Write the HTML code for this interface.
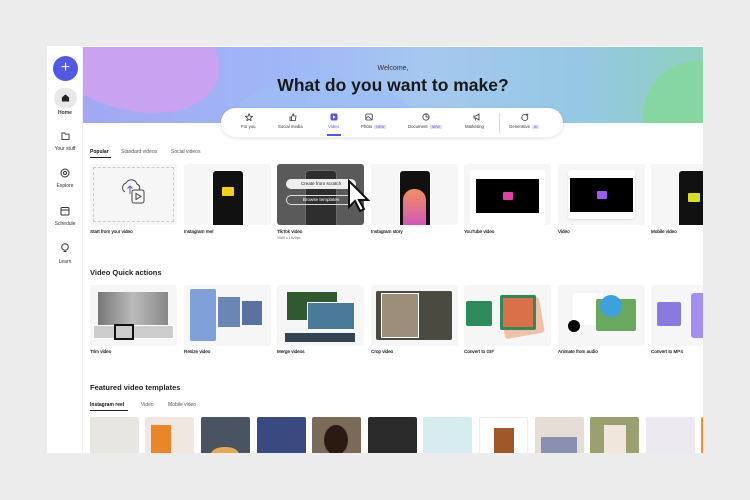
<!DOCTYPE html>
<html><head><meta charset="utf-8"><style>
*{margin:0;padding:0;box-sizing:border-box}
body{width:750px;height:500px;background:#ececec;font-family:"Liberation Sans",sans-serif;position:relative;overflow:hidden;color:#222}
.win{position:absolute;left:47px;top:46px;width:656px;height:407px;background:#fff;overflow:hidden}
.side{position:absolute;left:0;top:0;width:36px;height:407px;background:#fff;border-right:1px solid #eee}
.a{position:absolute}
.banner{position:absolute;left:36px;top:1px;width:620px;height:76px;background:linear-gradient(90deg,#a2a8f4 0%,#9fb8f6 35%,#a6c8f0 55%,#95c8e4 80%,#8ed0bf 100%);overflow:hidden}
.t{position:absolute;font-size:5px;color:#333;white-space:nowrap}
.card{position:absolute;background:#f6f6f6;border-radius:3px}
.lbl{position:absolute;font-size:4.6px;color:#222;white-space:nowrap;-webkit-text-stroke:.15px #222}
.h{position:absolute;font-size:7.5px;font-weight:bold;color:#222}
.ph{position:absolute;background:#111;border-radius:4px;border:1.5px solid #fff}
.new{background:#dfe2ff;color:#5a5ee0;font-size:3.5px;padding:0 2px;margin-left:2px}
.th{position:absolute;top:371px;width:49px;height:40px;border-radius:2px}
</style></head><body>
<div class="win">
 <div class="side">
  <div class="a" style="left:6px;top:10px;width:25px;height:25px;border-radius:50%;background:#5258e4;color:#fff;font-size:16px;text-align:center;line-height:24px">+</div>
  <div class="a" style="left:7px;top:42px;width:23px;height:20px;border-radius:10px;background:#e8e8e8"></div>
  <svg class="a" style="left:14px;top:47px" width="9" height="9" viewBox="0 0 10 10"><path d="M1 5L5 1.5 9 5V9.5H1Z" fill="#222"/></svg>
  <div class="t" style="left:0;width:36px;text-align:center;top:64px;font-weight:bold">Home</div>
  <svg class="a" style="left:14px;top:86px" width="9" height="8" viewBox="0 0 10 9"><path d="M1 1h3l1 1.5h4v6H1z" fill="none" stroke="#333"/></svg>
  <div class="t" style="left:0;width:36px;text-align:center;top:100px">Your stuff</div>
  <svg class="a" style="left:13px;top:122px" width="10" height="10"><circle cx="5" cy="5" r="4" fill="none" stroke="#333"/><circle cx="5" cy="5" r="1.5" fill="none" stroke="#333"/></svg>
  <div class="t" style="left:0;width:36px;text-align:center;top:137px">Explore</div>
  <svg class="a" style="left:13px;top:160px" width="10" height="10"><rect x="1" y="1.5" width="8" height="7.5" rx="1" fill="none" stroke="#333"/><path d="M1 4h8" stroke="#333"/></svg>
  <div class="t" style="left:0;width:36px;text-align:center;top:175px">Schedule</div>
  <svg class="a" style="left:13px;top:197px" width="10" height="10"><circle cx="5" cy="4" r="3.3" fill="none" stroke="#333"/><path d="M3.5 8.5h3" stroke="#333"/></svg>
  <div class="t" style="left:0;width:36px;text-align:center;top:213px">Learn</div>
 </div>
 <div class="banner">
  <div class="a" style="left:-60px;top:-60px;width:200px;height:120px;border-radius:50%;background:#c9a2f1;transform:rotate(20deg)"></div>
  <div class="a" style="left:140px;top:30px;width:200px;height:120px;border-radius:50%;background:#9dbdf5;opacity:.7"></div>
  <div class="a" style="left:560px;top:14px;width:110px;height:110px;border-radius:50%;background:#86d6a2"></div>
  <div class="a" style="left:0;width:620px;text-align:center;top:18px;font-size:7px;color:#333">Welcome,</div>
  <div class="a" style="left:0;width:620px;text-align:center;top:28px;font-size:17.5px;font-weight:bold;color:#1a1a1a">What do you want to make?</div>
 </div>
 <div class="a" style="left:174px;top:62px;width:342px;height:29px;background:#fff;border-radius:15px;box-shadow:0 1px 4px rgba(0,0,0,.12)"></div>
 <div class="a" style="left:452px;top:67px;width:1px;height:20px;background:#ddd"></div>
 <div class="a" style="left:280px;top:88px;width:14px;height:1.5px;background:#5258e4"></div>
 <svg class="a" style="left:198px;top:67px" width="8" height="8"><path d="M4 .8l1 2.3 2.5.3-1.9 1.7.5 2.5L4 6.4 1.9 7.6l.5-2.5L.5 3.4 3 3.1z" fill="none" stroke="#333" stroke-width=".8"/></svg>
 <svg class="a" style="left:242px;top:67px" width="8" height="8"><path d="M1 4h1.5v3.5H1zM2.5 4L4 1h.7v2H7l-.6 4.5H2.5" fill="none" stroke="#333" stroke-width=".8"/></svg>
 <svg class="a" style="left:283px;top:67px" width="8" height="8"><rect x=".5" y=".5" width="7" height="7" rx="1.5" fill="#5258e4"/><path d="M3 2.3v3.4L5.6 4z" fill="#fff"/></svg>
 <svg class="a" style="left:318px;top:67px" width="8" height="8"><rect x=".8" y="1" width="6.4" height="6" rx="1" fill="none" stroke="#333" stroke-width=".8"/><path d="M1 5.5l2-2 4 3" fill="none" stroke="#333" stroke-width=".7"/></svg>
 <svg class="a" style="left:375px;top:67px" width="8" height="8"><circle cx="4" cy="4" r="3.2" fill="none" stroke="#333" stroke-width=".8"/><path d="M4 .8V4h3.2" fill="none" stroke="#333" stroke-width=".8"/></svg>
 <svg class="a" style="left:426px;top:67px" width="8" height="8"><path d="M1 3h2l3-2v6L3 5H1z M2 5l.7 2.5" fill="none" stroke="#333" stroke-width=".8"/></svg>
 <svg class="a" style="left:474px;top:67px" width="8" height="8"><circle cx="3.8" cy="4.5" r="3" fill="none" stroke="#333" stroke-width=".8"/><path d="M6 .5v2.5M4.8 1.8h2.5" stroke="#333" stroke-width=".8"/></svg>
 <div class="t" style="left:194px;top:78px;font-size:4.3px">For you</div>
 <div class="t" style="left:231px;top:78px;font-size:4.3px">Social media</div>
 <div class="t" style="left:281px;top:78px;font-size:4.3px;color:#5258e4">Video</div>
 <div class="t" style="left:314px;top:78px;font-size:4.3px">Photo<span class="new">NEW</span></div>
 <div class="t" style="left:361px;top:78px;font-size:4.3px">Document<span class="new">NEW</span></div>
 <div class="t" style="left:418px;top:78px;font-size:4.3px">Marketing</div>
 <div class="t" style="left:462px;top:78px;font-size:4.3px">Generative<span class="new">AI</span></div>

 <div class="t" style="left:43px;top:103px;font-weight:bold;color:#111">Popular</div>
 <div class="a" style="left:43px;top:111px;width:21px;height:1.2px;background:#222"></div>
 <div class="t" style="left:74px;top:103px;color:#555">Standard videos</div>
 <div class="t" style="left:124px;top:103px;color:#555">Social videos</div>

 <div class="card" style="left:43px;top:118px;width:87px;height:61px"><div class="a" style="left:3px;top:3px;width:81px;height:55px;border:1px dashed #ccc"></div>
  <svg class="a" style="left:27px;top:12px" width="32" height="32" viewBox="0 0 32 32"><path d="M8 16a5 5 0 0 1 1-9 6 6 0 0 1 11 1 4 4 0 0 1 2 6" fill="none" stroke="#444" stroke-width="1"/><path d="M13 18v-8m-2.5 2.5L13 10l2.5 2.5" fill="none" stroke="#5258e4" stroke-width="1"/><rect x="15" y="14" width="12" height="13" rx="2" fill="#f6f6f6" stroke="#444"/><path d="M19 17.5v6l5-3z" fill="none" stroke="#444"/></svg></div>
 <div class="card" style="left:137px;top:118px;width:87px;height:61px;overflow:hidden"><div class="ph" style="left:28px;top:6px;width:32px;height:60px"><div class="a" style="left:9px;top:16px;width:12px;height:9px;background:#f2d11a;border-radius:1px"></div></div></div>
 <div class="card" style="left:230px;top:118px;width:87px;height:61px;background:#5a5a5a;overflow:hidden"><div class="ph" style="left:28px;top:6px;width:32px;height:60px;border-color:#777;opacity:.6"></div>
  <div class="a" style="left:9px;top:15px;width:70px;height:10px;border-radius:5px;background:#eee;font-size:4.6px;text-align:center;line-height:10px;color:#222">Create from scratch</div>
  <div class="a" style="left:9px;top:31px;width:70px;height:10px;border-radius:5px;border:1px solid #ddd;font-size:4.6px;text-align:center;line-height:8px;color:#fff">Browse templates</div></div>
 <svg class="a" style="left:300px;top:133px" width="28" height="34"><path d="M2 2v26l6-6 5 10 4-2-5-9h9z" fill="#fff" stroke="#111" stroke-width="2"/></svg>
 <div class="card" style="left:324px;top:118px;width:87px;height:61px;overflow:hidden"><div class="ph" style="left:28px;top:6px;width:32px;height:60px"><div class="a" style="left:3px;top:18px;width:23px;height:40px;border-radius:11px 11px 0 0;background:linear-gradient(#f09060,#d050c0)"></div></div></div>
 <div class="card" style="left:417px;top:118px;width:87px;height:61px;overflow:hidden"><div class="a" style="left:6px;top:6px;width:75px;height:55px;background:#fff;border-radius:2px"></div><div class="a" style="left:12px;top:15px;width:63px;height:34px;background:#000"></div><div class="a" style="left:39px;top:28px;width:10px;height:8px;background:#e040a0;border-radius:1px"></div></div>
 <div class="card" style="left:511px;top:118px;width:87px;height:61px"><div class="a" style="left:10px;top:6px;width:67px;height:49px;background:#fff;border-radius:3px;box-shadow:0 1px 2px rgba(0,0,0,.1)"></div><div class="a" style="left:12px;top:14px;width:63px;height:34px;background:#000"></div><div class="a" style="left:39px;top:27px;width:10px;height:8px;background:#9a5cf0;border-radius:1px"></div></div>
 <div class="card" style="left:604px;top:118px;width:60px;height:61px;overflow:hidden"><div class="ph" style="left:27px;top:6px;width:34px;height:60px"><div class="a" style="left:9px;top:22px;width:12px;height:9px;background:#d6e020;border-radius:1px"></div></div></div>

 <div class="lbl" style="left:43px;top:183px">Start from your video</div>
 <div class="lbl" style="left:137px;top:183px">Instagram reel</div>
 <div class="lbl" style="left:230px;top:183px">TikTok video</div>
 <div class="lbl" style="left:230px;top:190px;font-size:3.6px;color:#666;-webkit-text-stroke:0">1080 x 1920px</div>
 <div class="lbl" style="left:324px;top:183px">Instagram story</div>
 <div class="lbl" style="left:417px;top:183px">YouTube video</div>
 <div class="lbl" style="left:511px;top:183px">Video</div>
 <div class="lbl" style="left:604px;top:183px">Mobile video</div>

 <div class="h" style="left:43px;top:222px">Video Quick actions</div>
 <div class="card" style="left:43px;top:239px;width:87px;height:61px"><div class="a" style="left:8px;top:7px;width:70px;height:40px;background:linear-gradient(90deg,#777,#bbb,#888)"></div><div class="a" style="left:3px;top:40px;width:81px;height:14px;background:#ccc;border:1px solid #fff"></div><div class="a" style="left:24px;top:39px;width:20px;height:16px;border:2px solid #111"></div></div>
 <div class="card" style="left:137px;top:239px;width:87px;height:61px"><div class="a" style="left:6px;top:4px;width:26px;height:52px;background:#7fa0d8;border-radius:2px"></div><div class="a" style="left:34px;top:12px;width:22px;height:30px;background:#6a86b5"></div><div class="a" style="left:58px;top:16px;width:20px;height:24px;background:#5a72a0"></div></div>
 <div class="card" style="left:230px;top:239px;width:87px;height:61px"><div class="a" style="left:10px;top:7px;width:50px;height:28px;background:#2f5a30"></div><div class="a" style="left:30px;top:17px;width:48px;height:28px;background:#4a7a9a;border:1px solid #fff"></div><div class="a" style="left:8px;top:48px;width:70px;height:9px;background:#345"></div></div>
 <div class="card" style="left:324px;top:239px;width:87px;height:61px"><div class="a" style="left:5px;top:6px;width:76px;height:49px;background:#4a4a40;border-radius:2px"></div><div class="a" style="left:10px;top:8px;width:38px;height:45px;background:#9c8e78;border:1px solid #fff"></div></div>
 <div class="card" style="left:417px;top:239px;width:87px;height:61px"><div class="a" style="left:2px;top:16px;width:26px;height:25px;background:#2e8a5a;border-radius:2px"></div><div class="a" style="left:38px;top:15px;width:40px;height:36px;background:#f2c0a8;border-radius:3px;transform:rotate(-10deg)"></div><div class="a" style="left:36px;top:10px;width:36px;height:35px;background:#d9704a;border-radius:2px;border:3px solid #2e8a5a"></div></div>
 <div class="card" style="left:511px;top:239px;width:87px;height:61px"><div class="a" style="left:15px;top:8px;width:30px;height:32px;background:#fff"></div><div class="a" style="left:38px;top:14px;width:40px;height:32px;background:#6aa860;border-radius:2px"></div><div class="a" style="left:42px;top:10px;width:22px;height:22px;border-radius:50%;background:#3fa0e0"></div><div class="a" style="left:10px;top:35px;width:12px;height:12px;border-radius:50%;background:#000"></div></div>
 <div class="card" style="left:604px;top:239px;width:52px;height:61px;overflow:hidden"><div class="a" style="left:6px;top:17px;width:24px;height:24px;background:#8a7ae0;border-radius:2px"></div><div class="a" style="left:40px;top:8px;width:20px;height:45px;background:#a48ef0;border-radius:3px"></div></div>

 <div class="lbl" style="left:43px;top:303px">Trim video</div>
 <div class="lbl" style="left:137px;top:303px">Resize video</div>
 <div class="lbl" style="left:230px;top:303px">Merge videos</div>
 <div class="lbl" style="left:324px;top:303px">Crop video</div>
 <div class="lbl" style="left:417px;top:303px">Convert to GIF</div>
 <div class="lbl" style="left:511px;top:303px">Animate from audio</div>
 <div class="lbl" style="left:604px;top:303px">Convert to MP4</div>

 <div class="h" style="left:43px;top:337px">Featured video templates</div>
 <div class="t" style="left:43px;top:356px;font-weight:bold;color:#111">Instagram reel</div>
 <div class="a" style="left:43px;top:364px;width:38px;height:1.2px;background:#222"></div>
 <div class="t" style="left:94px;top:356px;color:#555">Video</div>
 <div class="t" style="left:121px;top:356px;color:#555">Mobile video</div>

 <div class="th" style="left:43px;background:#e8e6e0"></div>
 <div class="th" style="left:98px;background:#f0e8e0"><div class="a" style="left:6px;top:8px;width:20px;height:32px;background:#e8862a"></div></div>
 <div class="th" style="left:154px;background:#495361"><div class="a" style="left:10px;top:30px;width:28px;height:14px;border-radius:50%;background:#e8a850"></div></div>
 <div class="th" style="left:210px;background:#3a4a80"></div>
 <div class="th" style="left:265px;background:#7a6a58"><div class="a" style="left:12px;top:8px;width:24px;height:30px;border-radius:50%;background:#2a1a12"></div></div>
 <div class="th" style="left:321px;background:#2a2a2a"></div>
 <div class="th" style="left:376px;background:#d6ecf0"></div>
 <div class="th" style="left:432px;background:#fff;border:1px solid #eee"><div class="a" style="left:14px;top:10px;width:20px;height:30px;background:#a0582a"></div></div>
 <div class="th" style="left:488px;background:#e6ded6"><div class="a" style="left:6px;top:20px;width:36px;height:18px;background:#8a90b0"></div></div>
 <div class="th" style="left:543px;background:#9aa070"><div class="a" style="left:14px;top:8px;width:22px;height:32px;background:#f0e6da"></div></div>
 <div class="th" style="left:599px;background:#eceaf0"></div>
 <div class="th" style="left:654px;background:#f09030"></div>
</div>
</body></html>
